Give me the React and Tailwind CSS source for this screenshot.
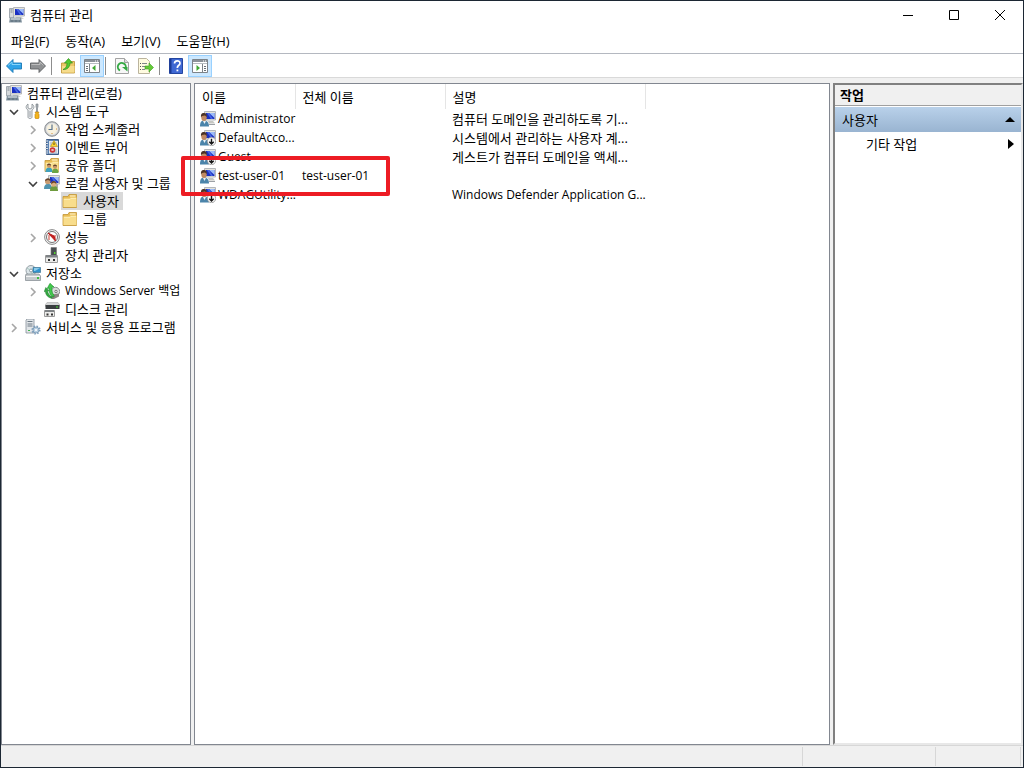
import React from 'react';

function Svg({ children, className = '' }) {
  return (
    <svg viewBox="0 0 16 16" className={`h-4 w-4 shrink-0 ${className}`} aria-hidden="true">
      {children}
    </svg>
  );
}

function Screen() {
  return (
    <>
      <path d="M4.500.5h11v8.500h-11z" fill="#e4e4dc" stroke="#b4b7bb" />
      <path d="M6 2h8.500v6H6z" fill="#1a2fc0" />
      <path d="M9 2h5.500v5z" fill="#9dbcf7" />
      <path d="M9 2l4 6h-2L7 2z" fill="#4566e4" />
    </>
  );
}

function ComputerIcon() {
  return (
    <Svg>
      <path d="M.5 1.500h4V11h-4z" fill="#d5d9dc" stroke="#a2a9b0" />
      <path d="M1.500 3h2M1.500 5h2" stroke="#7b858f" />
      <Screen />
      <path d="M7 9.500h5l3 2.500H7z" fill="#d3d5d2" />
      <path d="M1 10.500h11l1 5H0z" fill="#8797a3" />
      <path d="M2 12h9" stroke="#dfe6ea" />
      <path d="M1.500 14h10" stroke="#4e606e" strokeDasharray="3 1" />
    </Svg>
  );
}

function UserIcon({ disabled }) {
  return (
    <Svg>
      <Screen />
      <path d="M8 10h5l2 2.500H9z" fill="#c5c6c2" />
      <path d="M9 13.500h6" stroke="#9da1a6" />
      <path d="M0 15.500c0-4 1-6 4-6s5 2 5 6z" fill="#4b84aa" />
      <path d="M3 10l1.500 3L6 10z" fill="#eef3f6" />
      <ellipse cx="4" cy="6.500" rx="2.700" ry="3.500" fill="#c08a62" />
      <path d="M1 6.500C.5 3 2 1.700 4 2c2.400 0 3.200 2 2.700 4L5 4.500 2 5z" fill="#4b3325" />
      {disabled && (
        <>
          <circle cx="11.500" cy="11.500" r="4.200" fill="#f8f8f8" stroke="#8a8a8a" strokeWidth=".7" />
          <path d="M11.500 8.800v5M9.300 11.700l2.200 2.300 2.200-2.300" fill="none" stroke="#161616" strokeWidth="1.400" />
        </>
      )}
    </Svg>
  );
}

function UsersIcon() {
  return (
    <Svg>
      <Screen />
      <path d="M12 9h2v4h-2z" fill="#aaa" />
      <path d="M0 14c0-3 1-5 4-5s4 2 4 5z" fill="#5193ae" />
      <circle cx="3.700" cy="6.500" r="2.700" fill="#c99b70" />
      <path d="M1 6c0-3 5.500-4 5.500 0L4 5z" fill="#62432e" />
      <path d="M6 16c0-3 1-5 4-5s4 2 4 5z" fill="#6e9b3d" />
      <circle cx="9.700" cy="9" r="2.700" fill="#d9ac7c" />
      <path d="M7 9c0-4 5.500-4 5.500 0L10 7.500z" fill="#674225" />
    </Svg>
  );
}

function ToolsIcon() {
  return (
    <Svg>
      <path d="M3 1v4l2 1 2-1V1c3 2 2 5 0 6v7c0 2-4 2-4 0V7C1 6 0 3 3 1z" fill="#e9ebed" stroke="#848b91" strokeWidth=".8" />
      <path d="M5 8v6" stroke="#9ca2a8" />
      <path d="M11 1h2v3l-.5 1v4h-1V5L11 4z" fill="#a8afb5" stroke="#70777e" strokeWidth=".6" />
      <path d="M10 9h4l-.7 1.500.7 1V15c0 1-4 1-4 0v-3.500l.7-1z" fill="#f5b51d" stroke="#b97c0b" strokeWidth=".6" />
    </Svg>
  );
}

function ClockIcon() {
  return (
    <Svg>
      <circle cx="8" cy="8" r="7.300" fill="#c3c6c9" stroke="#8b8f93" />
      <circle cx="8" cy="8" r="5.700" fill="#f7f1de" stroke="#e2e3e4" />
      <path d="M8 3.500V8.500H4.500" fill="none" stroke="#5c7590" strokeWidth="1.200" />
      <path d="M8 12v1M12 8h1" stroke="#d18b32" />
    </Svg>
  );
}

function EventIcon() {
  return (
    <Svg>
      <path d="M2.500.5h12v15h-12z" fill="#5c83b3" stroke="#3f5d88" />
      <path d="M5 2h9v12.500H5z" fill="#e4e9ed" />
      <path d="M6 4h7M6 6h7M6 11h7M6 13h7" stroke="#8c9bad" strokeWidth=".7" />
      <path d="M1 2h3M1 4.500h3M1 7h3M1 9.500h3M1 12h3M1 14h3" stroke="#dce2e7" strokeWidth="1.200" />
      <path d="M10 1.500l3.500 6h-7z" fill="#ffd62f" stroke="#b68d13" strokeWidth=".6" />
      <path d="M10 3.500V6" stroke="#594719" />
      <circle cx="8.500" cy="11" r="2.800" fill="#cf3537" />
      <path d="M7.500 10l2 2m0-2l-2 2" stroke="#fff" strokeWidth=".8" />
    </Svg>
  );
}

function FolderBase() {
  return (
    <>
      <path d="M1 14.500V3.500h5l1-2h7.500v13z" fill="#e9bd55" stroke="#c39635" strokeWidth=".8" />
      <path d="M8 3h5.500" stroke="#fff8db" />
      <path d="M1.500 5.500h6l1-1h6v9.500h-13z" fill="#f8dd8c" />
      <path d="M2 6.500h6l1-1h5" fill="none" stroke="#fff1bd" strokeWidth=".7" />
    </>
  );
}

function FolderIcon() {
  return <Svg><FolderBase /></Svg>;
}

function SharedFolderIcon() {
  return (
    <Svg>
      <FolderBase />
      <path d="M1.500 15c0-3 1-4.500 3.500-4.500S8.500 12 8.500 15z" fill="#3fa0bd" />
      <circle cx="5" cy="8.800" r="2" fill="#c6946a" />
      <path d="M3 8.500c0-2.800 4-2.800 4 0L5 7.800z" fill="#5d3f28" />
      <path d="M8 16c0-3 1-4.500 3.300-4.500S14.500 13 14.500 16z" fill="#6aa544" />
      <circle cx="11" cy="9.800" r="2" fill="#c6946a" />
      <path d="M9 9.500c0-2.800 4-2.800 4 0l-2-.7z" fill="#5d3f28" />
    </Svg>
  );
}

function PerformanceIcon() {
  return (
    <Svg>
      <circle cx="8" cy="8" r="7.400" fill="#f3f3f3" stroke="#8a8a8a" />
      <circle cx="8" cy="8" r="5.500" fill="#fff" stroke="#666" strokeWidth=".9" />
      <path d="M5 11V6m6 5V6" stroke="#d76a62" strokeWidth="1.300" />
      <path d="M4 4l7.500 8L10 7z" fill="#c92222" stroke="#b81a1a" />
    </Svg>
  );
}

function DeviceIcon() {
  return (
    <Svg>
      <path d="M7 .5h5.500V9H7z" fill="#4a4e51" stroke="#777" strokeWidth=".6" />
      <path d="M10 5h1.500v2H10z" fill="#54d52d" />
      <path d="M1.500 8.500h12v7h-12z" fill="#ececea" stroke="#9a9a9a" />
      <path d="M2 8h11v2.500H2z" fill="#7f8386" />
      <path d="M4 12h2v2H4zm5 0h2v2H9z" fill="#333" />
    </Svg>
  );
}

function StorageIcon() {
  return (
    <Svg>
      <circle cx="6" cy="5.500" r="5" fill="#dce5e9" stroke="#98a2a8" />
      <circle cx="6" cy="5.500" r="1.500" fill="#fff" stroke="#8d989e" />
      <path d="M2 3l3 2M6 7l2 3" stroke="#a5c5bd" />
      <path d="M8 2.500h7.500v5H8z" fill="#3192cd" stroke="#3e7595" strokeWidth=".7" />
      <path d="M9 3h6l-5 3H9z" fill="#8bcbe9" />
      <path d="M1 9h13l1.500 2v4.500H.5V11z" fill="#c5cacd" stroke="#7f878c" strokeWidth=".7" />
      <path d="M1 11.500h14" stroke="#f4f4f4" />
      <path d="M12 12h2v2h-2z" fill="#41bd42" />
    </Svg>
  );
}

function BackupIcon() {
  return (
    <Svg>
      <circle cx="11.500" cy="8.500" r="4.200" fill="#d8dcdb" stroke="#8b9292" />
      <circle cx="12" cy="8.500" r="1.200" fill="#f6f6f6" stroke="#777" />
      <path d="M8 11.500l7-1v3l-5 2.500H8z" fill="#8d8684" />
      <path d="M10 14C6.500 13 4.500 9.500 5 5L3.200 5.500 6 .3 10 4 8 4.200C7.500 8 8.500 11 10 12z" fill="#43c94c" stroke="#1b8d2e" strokeWidth=".6" />
      <path d="M8 15.500C4 14.500 1.500 12 1.500 8.500L.2 8.700 1.800 4.500 4.800 7.800 3.500 8C4 11 6 13 8 13.500z" fill="#35a942" stroke="#187528" strokeWidth=".5" />
    </Svg>
  );
}

function DiskIcon() {
  return (
    <Svg>
      <path d="M3 1.500h11l1.500 2v2H1.500v-2z" fill="#d3d5d6" stroke="#aaa" strokeWidth=".6" />
      <path d="M1.500 4h14v4h-14z" fill="#3a3e41" />
      <path d="M12 6h2" stroke="#47e034" />
      <path d="M.5 9.500h10v6H.5z" fill="#ececea" stroke="#9a9a9a" />
      <path d="M1 9h9v2H1z" fill="#7f8386" />
      <path d="M2.500 12.500h2v2h-2zm4.500 0h2v2H7z" fill="#333" />
    </Svg>
  );
}

function ServicesIcon() {
  return (
    <Svg>
      <path d="M1 1l1-1h7v14H1z" fill="#e1e5e8" stroke="#87919a" strokeWidth=".8" />
      <path d="M2.500 2.500h5M2.500 5h5M2.500 7h5" stroke="#6c7984" />
      <path d="M3 11h2v1H3z" fill="#3fb54a" />
      <circle cx="11" cy="11" r="3.600" fill="none" stroke="#7f9fbd" strokeWidth="2" strokeDasharray="1.500 1.330" />
      <circle cx="11" cy="11" r="3" fill="#b8cfe2" stroke="#7090ae" strokeWidth=".7" />
      <circle cx="11" cy="11" r="1.100" fill="#fff" />
    </Svg>
  );
}

function ArrowIcon({ forward }) {
  return (
    <Svg>
      <path
        d={forward ? 'M15.500 8L9 1.500v3.500H.5v6H9v3.500z' : 'M.5 8L7 1.500v3.500h8.500v6H7v3.500z'}
        fill={forward ? '#8f9193' : '#2fa3e8'}
        stroke={forward ? '#5e6062' : '#1a78b5'}
        strokeWidth=".9"
      />
      <path
        d={forward ? 'M1.500 6.500h8.500V4l3.500 3.500' : 'M2 7.500L6 4v2.500h8.500'}
        fill="none"
        stroke={forward ? '#bdbdbd' : '#87d5fb'}
      />
    </Svg>
  );
}

function UpFolderIcon() {
  return (
    <Svg>
      <path d="M1.500 15V5H6l1-1.500h7.500V15z" fill="#ecc867" stroke="#bd9234" strokeWidth=".8" />
      <path d="M2 8h12.500v6.500H2z" fill="#f6dc8c" />
      <path d="M3 11.500C6 10.500 7 8 7 5H4.500L8.500.5 12.500 5H10c0 4-3 7-7 6.500z" fill="#55c931" stroke="#2e911d" strokeWidth=".7" />
    </Svg>
  );
}

function PaneIcon({ right }) {
  return (
    <Svg>
      <path d="M.5 1.500h15v13H.5z" fill="#fff" stroke="#7d8389" />
      <path d="M1 2h14v2H1z" fill="#8b9299" />
      <path d="M11 3h1m1 0h1" stroke="#fff" />
      <path d="M1 5.500h14" stroke="#b7bdc2" />
      <path d={right ? 'M10.500 6v8' : 'M5.500 6v8'} stroke="#7d8389" />
      <path d={right ? 'M12 8.500h2m-2 2h2m-2 2h2' : 'M2 8.500h2m-2 2h2m-2 2h2'} stroke="#687078" />
      <path d={right ? 'M4.500 7v6L8 10z' : 'M11.500 7v6L8 10z'} fill="#3fa832" />
    </Svg>
  );
}

function RefreshIcon() {
  return (
    <Svg>
      <path d="M1.500.5h9l4 4v11h-13z" fill="#f7f7f7" stroke="#a3a3a3" />
      <path d="M10.500.5v4h4" fill="#ddd" stroke="#a3a3a3" />
      <path d="M6 12.500a4 4 0 1 1 5.500-2" fill="none" stroke="#35a944" strokeWidth="1.900" />
      <path d="M8 9h5.500v4.500z" fill="#35a944" />
    </Svg>
  );
}

function ExportIcon() {
  return (
    <Svg>
      <path d="M.5.500h8l3 3v12H.5z" fill="#fffbe0" stroke="#bbb49d" />
      <path d="M2 5.500h1m-1 3h1m-1 3h1" stroke="#555" />
      <path d="M4 5.500h5m-5 3h3m-3 3h3" stroke="#81858a" />
      <path d="M7 8h4V5l4.500 4.500L11 14v-3H7z" fill="#64ca37" stroke="#3c9d21" strokeWidth=".6" />
    </Svg>
  );
}

function HelpIcon() {
  return (
    <Svg>
      <path d="M1.500.5h13v15h-13z" fill="#3f68d3" stroke="#2446a0" />
      <path d="M1.500 1h2v14h-2z" fill="#1c3a94" />
      <path d="M6.500 5.500c0-3.500 5.500-3.500 5.500-.3C12 7.500 9.300 7 9.300 10" fill="none" stroke="#fff" strokeWidth="1.700" />
      <path d="M8.500 11.500h1.800v1.800H8.500z" fill="#fff" />
    </Svg>
  );
}

const tree = [
  { depth: 1, label: '시스템 도구', Icon: ToolsIcon, state: 'open' },
  { depth: 2, label: '작업 스케줄러', Icon: ClockIcon, state: 'closed' },
  { depth: 2, label: '이벤트 뷰어', Icon: EventIcon, state: 'closed' },
  { depth: 2, label: '공유 폴더', Icon: SharedFolderIcon, state: 'closed' },
  { depth: 2, label: '로컬 사용자 및 그룹', Icon: UsersIcon, state: 'open' },
  { depth: 3, label: '사용자', Icon: FolderIcon, selected: true },
  { depth: 3, label: '그룹', Icon: FolderIcon },
  { depth: 2, label: '성능', Icon: PerformanceIcon, state: 'closed' },
  { depth: 2, label: '장치 관리자', Icon: DeviceIcon },
  { depth: 1, label: '저장소', Icon: StorageIcon, state: 'open' },
  { depth: 2, label: 'Windows Server 백업', Icon: BackupIcon, state: 'closed', latin: true },
  { depth: 2, label: '디스크 관리', Icon: DiskIcon },
  { depth: 1, label: '서비스 및 응용 프로그램', Icon: ServicesIcon, state: 'closed' },
];

const indents = { 1: 'pl-1', 2: 'pl-[23px]', 3: 'pl-[41px]' };

const users = [
  { name: 'Administrator', full: '', description: '컴퓨터 도메인을 관리하도록 기...' },
  { name: 'DefaultAcco...', full: '', description: '시스템에서 관리하는 사용자 계...', disabled: true },
  { name: 'Guest', full: '', description: '게스트가 컴퓨터 도메인을 액세...', disabled: true },
  { name: 'test-user-01', full: 'test-user-01', description: '' },
  { name: 'WDAGUtility...', full: '', description: 'Windows Defender Application G...', disabled: true, latin: true },
];

function TreeRow({ depth, label, Icon, state, selected, latin }) {
  return (
    <li role="treeitem" aria-level={depth + 1} aria-selected={!!selected} className={`flex h-[18px] items-center ${indents[depth]}`}>
      {state ? (
        <button type="button" aria-label={label} aria-expanded={state === 'open'} className="flex w-4 shrink-0 justify-center pt-0.5">
          <svg viewBox="0 0 10 10" className="h-2.5 w-2.5" fill="none">
            {state === 'open' ? (
              <path d="M1 3l4 4 4-4" stroke="#404040" strokeWidth="1.600" />
            ) : (
              <path d="M3 1l4 4-4 4" stroke="#a6a6a6" strokeWidth="1.600" />
            )}
          </svg>
        </button>
      ) : (
        <span className="w-4 shrink-0" />
      )}
      <span className={`ml-0.5 flex h-[18px] items-center gap-1 whitespace-nowrap px-px ${selected ? 'bg-[#d9d9d9] pr-1' : ''}`}>
        <Icon />
        <span className={`pl-px ${latin ? 'text-xs' : ''}`}>{label}</span>
      </span>
    </li>
  );
}

function ToolButton({ label, active, children }) {
  return (
    <button
      type="button"
      aria-label={label}
      className={`flex h-[22px] w-6 items-center justify-center ${active ? 'border border-[#99d1ff] bg-[#cce8ff]' : ''}`}
    >
      {children}
    </button>
  );
}

function Divider() {
  return <span className="mr-1 ml-px h-[18px] w-px bg-[#8d8d8d]" />;
}

export default function App() {
  return (
    <div className="flex h-screen w-full flex-col overflow-hidden border border-[#1c2733] bg-[#f0f0f0] font-['Open_Sans','Noto_Sans_CJK_KR',sans-serif] text-[13px] leading-[18px] text-black">
      <header className="bg-white">
        <div className="flex h-7 items-center pl-2">
          <ComputerIcon />
          <h1 className="grow pl-[5px]">컴퓨터 관리</h1>
          <button type="button" aria-label="최소화" className="flex h-full w-[46px] items-center justify-center">
            <svg viewBox="0 0 10 10" className="h-2.5 w-2.5"><path d="M0 5.500h10" stroke="#000" /></svg>
          </button>
          <button type="button" aria-label="최대화" className="flex h-full w-[46px] items-center justify-center">
            <svg viewBox="0 0 10 10" className="h-2.5 w-2.5"><path d="M.5.5h9v9h-9z" fill="none" stroke="#000" /></svg>
          </button>
          <button type="button" aria-label="닫기" className="flex h-full w-[46px] items-center justify-center">
            <svg viewBox="0 0 10 10" className="h-2.5 w-2.5"><path d="M0 0l10 10M10 0L0 10" stroke="#000" /></svg>
          </button>
        </div>
        <nav className="flex h-6 items-center gap-4 pl-2.5">
          <button type="button">파일(F)</button>
          <button type="button">동작(A)</button>
          <button type="button">보기(V)</button>
          <button type="button">도움말(H)</button>
        </nav>
        <div role="toolbar" className="flex items-center border-y border-t-[#b4b8c0] border-b-[#d9d9d9] pt-px pl-px">
          <ToolButton label="뒤로"><ArrowIcon /></ToolButton>
          <ToolButton label="앞으로"><ArrowIcon forward /></ToolButton>
          <Divider />
          <ToolButton label="위로"><UpFolderIcon /></ToolButton>
          <ToolButton label="콘솔 트리 표시" active><PaneIcon /></ToolButton>
          <Divider />
          <ToolButton label="새로 고침"><RefreshIcon /></ToolButton>
          <ToolButton label="목록 내보내기"><ExportIcon /></ToolButton>
          <Divider />
          <ToolButton label="도움말"><HelpIcon /></ToolButton>
          <ToolButton label="작업 창 표시" active><PaneIcon right /></ToolButton>
        </div>
      </header>

      <main className="flex min-h-0 grow gap-[3px] pt-[5px]">
        <aside className="w-[190px] shrink-0 border border-[#828790] bg-white">
          <div className="flex h-[18px] items-center gap-[5px] pl-1">
            <ComputerIcon />
            <span>컴퓨터 관리(로컬)</span>
          </div>
          <ul role="tree" aria-label="컴퓨터 관리(로컬)">
            {tree.map((item) => <TreeRow key={item.label} {...item} />)}
          </ul>
        </aside>

        <section className="relative min-w-0 grow border border-[#828790] bg-white">
          <table className="w-full table-fixed border-collapse text-left">
            <colgroup>
              <col className="w-[100px]" />
              <col className="w-[150px]" />
              <col className="w-[200px]" />
              <col />
            </colgroup>
            <thead>
              <tr className="h-[25px]">
                <th className="border-r border-[#e5e5e5] p-0 pl-[7px] font-normal">이름</th>
                <th className="border-r border-[#e5e5e5] p-0 pl-[7px] font-normal">전체 이름</th>
                <th className="border-r border-[#e5e5e5] p-0 pl-[7px] font-normal">설명</th>
                <td className="p-0" />
              </tr>
            </thead>
            <tbody>
              {users.map((user) => (
                <tr key={user.name} className="h-[19px] whitespace-nowrap">
                  <td className="p-0 pl-[5px] text-xs">
                    <span className="flex items-center gap-0.5">
                      <UserIcon disabled={user.disabled} />
                      {user.name}
                    </span>
                  </td>
                  <td className="p-0 pl-[7px] text-xs">{user.full}</td>
                  <td className={`p-0 pl-[7px] ${user.latin ? 'text-xs' : ''}`}>{user.description}</td>
                  <td className="p-0" />
                </tr>
              ))}
            </tbody>
          </table>
          <div className="pointer-events-none absolute -left-3.5 top-[72px] h-10 w-[209px] rounded-xs border-4 border-[#ed1c24]" />
        </section>

        <aside className="w-[190px] shrink-0 border-2 border-t-[#808080] border-r-[#e8e8e8] border-b-[#e8e8e8] border-l-[#808080] bg-white">
          <h2 className="flex h-[21px] items-center border-b border-[#a0a0a0] bg-[#f0f0f0] pl-[5px] font-bold">작업</h2>
          <button type="button" className="mt-px flex h-[25px] w-full items-center justify-between bg-linear-to-b from-[#b9d1ea] to-[#99b4d1] pr-1.5 pl-[7px]">
            사용자
            <svg viewBox="0 0 10 5" className="h-[5px] w-2.5"><path d="M0 5l5-5 5 5z" /></svg>
          </button>
          <button type="button" className="flex h-[23px] w-full items-center justify-between pr-[7px] pl-[31px]">
            기타 작업
            <svg viewBox="0 0 6 10" className="h-2.5 w-1.5"><path d="M0 0l6 5-6 5z" /></svg>
          </button>
        </aside>
      </main>

      <footer className="flex h-[22px] shrink-0 border-t border-[#d7d7d7] py-px">
        <span className="grow border-r border-[#d7d7d7]" />
        <span className="w-[133px] border-r border-[#d7d7d7]" />
        <span className="mr-0.5 w-[85px] border-r border-[#d7d7d7]" />
      </footer>
    </div>
  );
}
